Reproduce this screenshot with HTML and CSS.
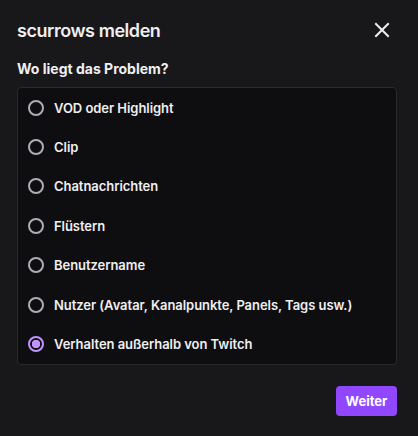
FILE: index.html
```html
<!DOCTYPE html>
<html lang="de">
<head>
<meta charset="utf-8">
<link rel="stylesheet" href="styles.css">
</head>
<body>
<div class="modal">
  <div class="header">
    <h1 class="title">scurrows melden</h1>
    <button class="close" aria-label="Schließen">
      <svg width="20" height="20" viewBox="0 0 20 20"><path d="M4 4 L16 16 M16 4 L4 16" stroke="#efeff1" stroke-width="2" stroke-linecap="square" fill="none"/></svg>
    </button>
  </div>
  <h2 class="question">Wo liegt das Problem?</h2>
  <div class="options">
    <label class="option"><span class="radio"></span><span class="label">VOD oder Highlight</span></label>
    <label class="option"><span class="radio"></span><span class="label">Clip</span></label>
    <label class="option"><span class="radio"></span><span class="label">Chatnachrichten</span></label>
    <label class="option"><span class="radio"></span><span class="label">Flüstern</span></label>
    <label class="option"><span class="radio"></span><span class="label">Benutzername</span></label>
    <label class="option"><span class="radio"></span><span class="label">Nutzer (Avatar, Kanalpunkte, Panels, Tags usw.)</span></label>
    <label class="option"><span class="radio checked"></span><span class="label">Verhalten außerhalb von Twitch</span></label>
  </div>
  <div class="footer">
    <button class="next">Weiter</button>
  </div>
</div>
</body>
</html>
```
FILE: styles.css
```css
html, body {
  margin: 0;
  padding: 0;
  background: #18181b;
  width: 418px;
  height: 436px;
  overflow: hidden;
}
body {
  font-family: Inter, "Noto Sans", sans-serif;
  color: #efeff1;
}
.modal {
  padding: 17px 21px 0 17px;
  display: flex;
  flex-direction: column;
}
.header {
  display: flex;
  align-items: center;
  justify-content: space-between;
  height: 26px;
}
.title {
  margin: 0;
  font-size: 18px;
  font-weight: 600;
  letter-spacing: -0.45px;
}
.close {
  background: none;
  border: 0;
  padding: 0;
  width: 20px;
  height: 20px;
  margin-right: 5px;
  margin-top: -1px;
  display: flex;
}
.question {
  margin: 17px 0 0 0;
  font-size: 14px;
  font-weight: 700;
  line-height: 18px;
}
.options {
  margin-top: 9px;
  background: #0e0e10;
  border: 1px solid #2a2a2e;
  border-radius: 4px;
  display: flex;
  flex-direction: column;
}
.option {
  height: 39.4px;
  display: flex;
  align-items: center;
  padding-left: 10px;
  font-size: 13px;
  font-weight: 600;
  letter-spacing: -0.05px;
}
.radio {
  width: 16px;
  height: 16px;
  box-sizing: border-box;
  border: 2px solid #adadb8;
  border-radius: 50%;
  margin-right: 10px;
  flex: none;
}
.radio.checked {
  border-color: #bf94ff;
  background: radial-gradient(circle, #bf94ff 0 4px, transparent 4.5px);
}
.footer {
  display: flex;
  justify-content: flex-end;
  margin-top: 21px;
}
.next {
  background: #9147ff;
  color: #fff;
  border: 0;
  border-radius: 4px;
  height: 30px;
  width: 61px;
  font-family: Inter, sans-serif;
  font-size: 13px;
  font-weight: 700;
  padding: 0;
}
```
